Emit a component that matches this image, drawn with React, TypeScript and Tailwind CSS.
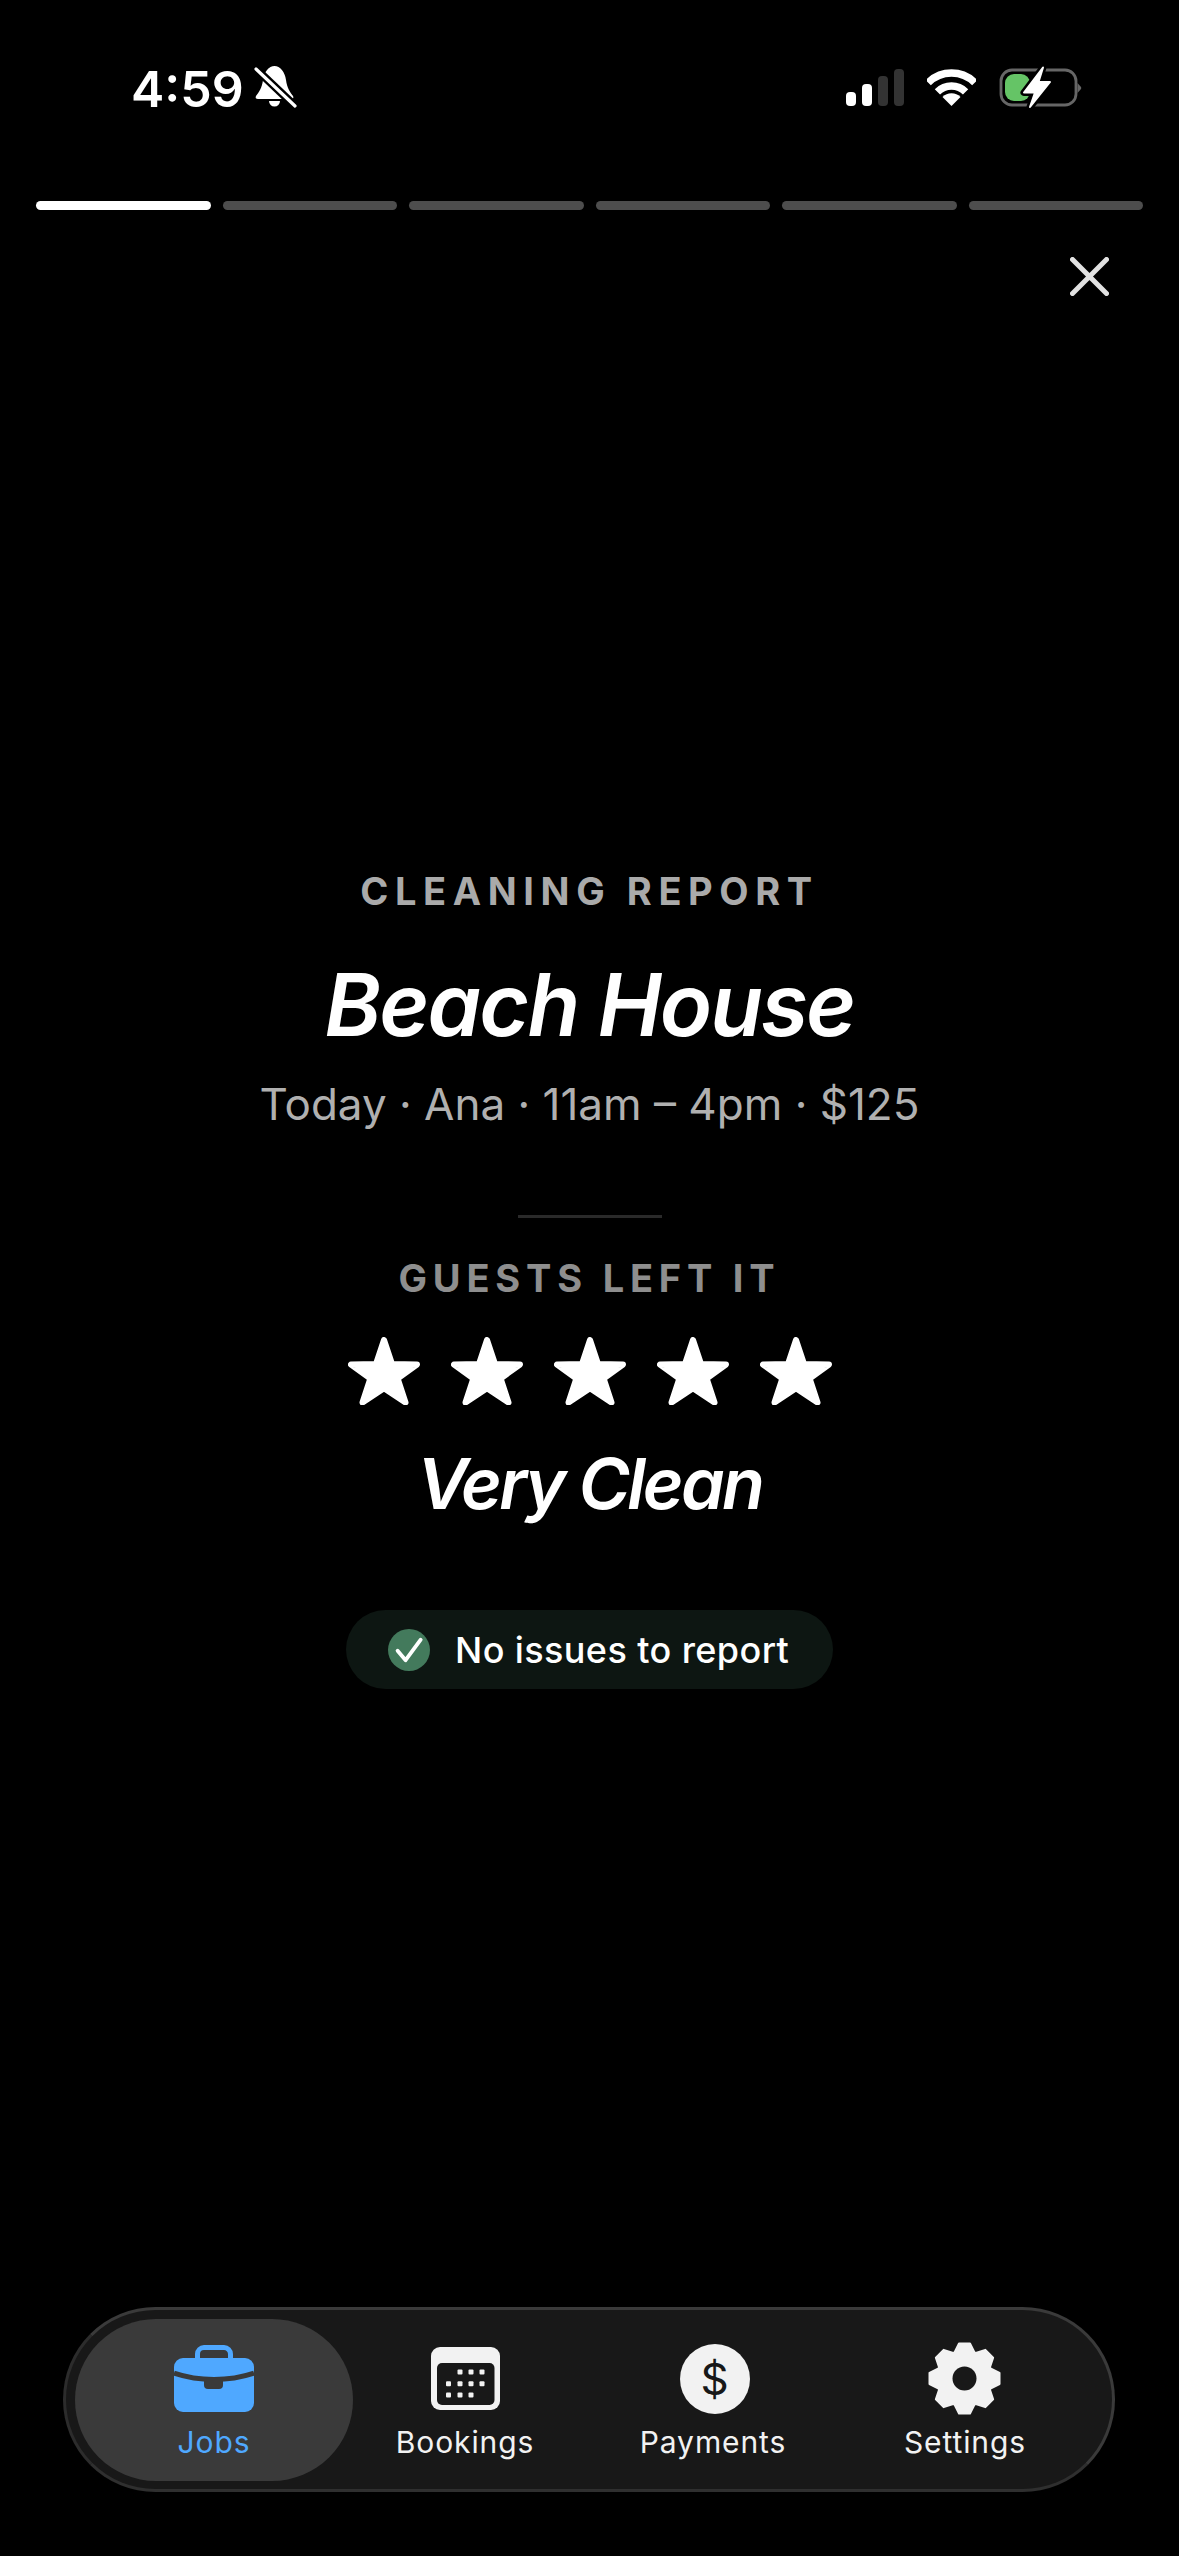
import React from "react";

const STAR_PATH = "M36 3 L44 27 L69 27.5 L49.6 41.5 L57.5 65.5 L36 51.3 L14.5 65.5 L22.4 41.5 L3 27.5 L28 27 Z";

function gearPath() {
  const tooth = [
    [-10, -26],
    [-5.5, -35],
    [5.5, -35],
    [10, -26],
  ];
  let d = "";
  for (let i = 0; i < 8; i++) {
    const a = (i * Math.PI) / 4;
    for (const [x, y] of tooth) {
      const px = 36.5 + x * Math.cos(a) - y * Math.sin(a);
      const py = 36.5 + x * Math.sin(a) + y * Math.cos(a);
      d += `${d ? "L" : "M"}${px.toFixed(2)} ${py.toFixed(2)} `;
    }
  }
  return d + "Z";
}

function BellSlash() {
  return (
    <svg width="55" height="55" viewBox="0 0 55 55" className="shrink-0">
      <path
        d="M25.5 6 C31 6 36 12 37 20 C38 28 41 32 44 36 C45 38 44 39 42 39 L9 39 C7 39 6 38 7 36 C10 32 13 28 14 20 C15 12 20 6 25.5 6 Z"
        fill="#fff"
      />
      <path d="M20 41 h11 a5.5 5.5 0 0 1 -11 0 z" fill="#fff" />
      <path d="M7 9 L46 46" stroke="#000" strokeWidth="8" />
      <path d="M7 9 L46 46" stroke="#fff" strokeWidth="3.2" strokeLinecap="round" />
    </svg>
  );
}

function Signal() {
  return (
    <svg width="58" height="37" viewBox="0 0 58 37">
      <rect x="0" y="23" width="10" height="14" rx="4" fill="#fff" />
      <rect x="16" y="15" width="10" height="22" rx="4" fill="#fff" />
      <rect x="32" y="7" width="10" height="30" rx="4" fill="#333" />
      <rect x="48" y="0" width="10" height="37" rx="4" fill="#333" />
    </svg>
  );
}

function Wifi() {
  return (
    <svg width="49" height="37" viewBox="0 0 49 37" fill="none">
      <path d="M1.2 13.7 A33 33 0 0 1 47.8 13.7" stroke="#fff" strokeWidth="7.5" />
      <path d="M10.4 22.9 A20 20 0 0 1 38.6 22.9" stroke="#fff" strokeWidth="7.5" />
      <path d="M24.5 37 L15.5 28 A12.7 12.7 0 0 1 33.5 28 Z" fill="#fff" />
    </svg>
  );
}

function Battery() {
  return (
    <svg width="100" height="55" viewBox="0 0 100 55" fill="none">
      <rect x="11" y="10" width="75" height="35" rx="11" stroke="#666" strokeWidth="2.8" />
      <path d="M87.5 23 L91 27 Q91.5 28 91 29 L87.5 33 Z" fill="#666" />
      <rect x="15" y="14" width="25" height="27" rx="9" fill="#65c466" />
      <path
        d="M53 7.5 L34 32.5 L45 32.5 L40 47 L60 22 L48.5 22 Z"
        fill="#000"
        stroke="#000"
        strokeWidth="7"
        strokeLinejoin="round"
      />
      <path
        d="M53 7.5 L34 32.5 L45 32.5 L40 47 L60 22 L48.5 22 Z"
        fill="#fff"
        stroke="#fff"
        strokeWidth="2"
        strokeLinejoin="round"
      />
    </svg>
  );
}

function Star() {
  return (
    <svg width="72" height="68" viewBox="0 0 72 68">
      <path d={STAR_PATH} fill="#fff" stroke="#fff" strokeWidth="6" strokeLinejoin="round" />
    </svg>
  );
}

function Briefcase() {
  return (
    <svg width="80" height="67" viewBox="0 0 80 67" fill="none">
      <path d="M23.5 15 V9 a6.5 6.5 0 0 1 6.5 -6.5 H50 a6.5 6.5 0 0 1 6.5 6.5 V15" stroke="#4fa8ff" strokeWidth="5" />
      <rect x="0" y="13" width="80" height="54" rx="9" fill="#4fa8ff" />
      <path d="M0 28 C25 36.5 55 36.5 80 28" stroke="#3a3a3a" strokeWidth="5" />
      <path d="M30 34 H49 V40 a4 4 0 0 1 -4 4 H34 a4 4 0 0 1 -4 -4 Z" fill="#3a3a3a" />
    </svg>
  );
}

function CalendarIcon() {
  const rows = [
    [2, 3, 4],
    [1, 2, 3, 4],
    [1, 2, 3],
  ];
  const cols = [0, 17.5, 29, 40, 51];
  const ys = [25, 36.7, 48];
  return (
    <svg width="69" height="63" viewBox="0 0 69 63">
      <rect x="0" y="0" width="69" height="63" rx="9" fill="#f2f2f2" />
      <rect x="6" y="16" width="57.5" height="42" rx="5" fill="#181818" />
      {rows.map((row, r) =>
        row.map((c) => (
          <rect key={`${r}-${c}`} x={cols[c] - 2.5} y={ys[r] - 2.5} width="5" height="5" rx="1" fill="#f2f2f2" />
        ))
      )}
    </svg>
  );
}

function Gear() {
  return (
    <svg width="73" height="73" viewBox="0 0 73 73" className="mr-[2px]">
      <path d={gearPath()} fill="#f2f2f2" stroke="#f2f2f2" strokeWidth="2" strokeLinejoin="round" />
      <circle cx="36.5" cy="36.5" r="12" fill="#181818" />
    </svg>
  );
}

function NavItem({
  label,
  icon,
  className,
  labelClass = "text-[#f2f2f2]",
}: {
  label: string;
  icon: React.ReactNode;
  className: string;
  labelClass?: string;
}) {
  return (
    <div className={`flex h-[162px] flex-col items-center pt-[24px] ${className}`}>
      <div className="flex h-[72px] items-center justify-center">{icon}</div>
      <div className={`mt-[9px] text-[30px] leading-[36px] tracking-[0.9px] ${labelClass}`}>{label}</div>
    </div>
  );
}

export default function App() {
  const segments = [0, 1, 2, 3, 4, 5];
  return (
    <div className="flex h-[2556px] w-[1179px] flex-col overflow-hidden bg-black font-['Inter',sans-serif] text-white">
      {/* status bar */}
      <div className="mt-[60px] flex h-[55px] items-center pr-[89px] pl-[131px]">
        <span className="relative top-[1px] text-[50px] leading-none font-semibold">4:59</span>
        <span className="ml-[5px]">
          <BellSlash />
        </span>
        <div className="ml-auto flex items-center">
          <Signal />
          <span className="ml-[23px]">
            <Wifi />
          </span>
          <span className="ml-[14px]">
            <Battery />
          </span>
        </div>
      </div>

      {/* story progress */}
      <div className="mt-[86px] flex gap-[12px] px-[36px]">
        {segments.map((s) => (
          <div key={s} className={`h-[9px] flex-1 rounded-full ${s === 0 ? "bg-white" : "bg-[#4d4d4d]"}`} />
        ))}
      </div>

      <div className="mt-[47px] flex justify-end pr-[70px]">
        <svg width="39" height="39" viewBox="0 0 39 39" fill="none">
          <path d="M2.5 2.5 L36.5 36.5 M36.5 2.5 L2.5 36.5" stroke="#e2e2e2" strokeWidth="5" strokeLinecap="round" />
        </svg>
      </div>

      {/* report */}
      <div className="mt-[576px] flex flex-col items-center">
        <div className="text-[38px] leading-[38px] font-bold tracking-[6.6px] text-[#aaaaaa]">CLEANING REPORT</div>
        <div className="mt-[52px] text-[86px] leading-[86px] font-semibold tracking-[-2px] italic">Beach House</div>
        <div className="mt-[34px] text-[44px] leading-[44px] text-[#b0b0b0]">Today · Ana · 11am – 4pm · $125</div>
        <div className="mt-[89px] h-[3px] w-[144px] bg-[#2a2a2a]" />
        <div className="mt-[41px] text-[38px] leading-[38px] font-bold tracking-[5.8px] text-[#8e8e8e]">GUESTS LEFT IT</div>
        <div className="mt-[40px] flex gap-[31px]">
          <Star />
          <Star />
          <Star />
          <Star />
          <Star />
        </div>
        <div className="mt-[44px] text-[70px] leading-[70px] font-semibold tracking-[-2.8px] italic">Very Clean</div>
        <div className="mt-[91px] flex h-[79px] w-[487px] items-center gap-[25px] rounded-full bg-[#0d1612] pl-[42px]">
          <svg width="42" height="42" viewBox="0 0 42 42" fill="none" className="shrink-0">
            <circle cx="21" cy="21" r="21" fill="#437a5c" />
            <path d="M9.6 21.7 L17.6 31.2 L32.7 10.7" stroke="#fff" strokeWidth="3.8" strokeLinecap="round" strokeLinejoin="round" />
          </svg>
          <span className="text-[36px] leading-none font-medium tracking-[0.4px]">No issues to report</span>
        </div>
      </div>

      {/* tab bar */}
      <div className="mt-auto mb-[64px] ml-[63px] flex h-[185px] w-[1052px] items-center rounded-full border-[3px] border-[#3a3a3a] border-l-[#2c2c2c] border-b-[#2f2f2f] bg-[#181818] px-[9px]">
        <NavItem
          label="Jobs"
          icon={<Briefcase />}
          className="w-[278px] rounded-full bg-[#3a3a3a]"
          labelClass="text-[#4fa8ff]"
        />
        <NavItem label="Bookings" icon={<CalendarIcon />} className="w-[224px]" />
        <NavItem
          label="Payments"
          icon={
            <div className="ml-[3px] flex h-[70px] w-[70px] items-center justify-center rounded-full bg-[#f2f2f2] text-[44px] leading-none text-[#181818]">
              $
            </div>
          }
          className="w-[272px]"
        />
        <NavItem label="Settings" icon={<Gear />} className="w-[232px]" />
      </div>
    </div>
  );
}
